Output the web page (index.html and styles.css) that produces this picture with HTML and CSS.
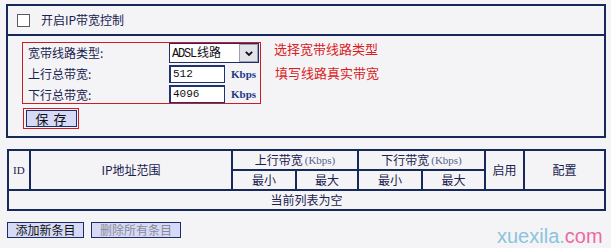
FILE: index.html
```html
<!DOCTYPE html>
<html lang="zh-CN">
<head>
<meta charset="utf-8">
<title>IP带宽控制</title>
<link rel="stylesheet" href="styles.css">
</head>
<body>
<div class="page">
  <section class="panel">
    <div class="panel-head">
      <span class="checkbox"></span>
      <span class="head-label">开启IP带宽控制</span>
    </div>
    <div class="panel-body">
      <div class="row-main">
        <div class="red-box form-grid">
          <span class="label">宽带线路类型:</span>
          <div class="select">
            <span class="select-text"><span class="latin">ADSL</span>线路</span>
            <span class="select-btn">
              <svg width="8" height="5" viewBox="0 0 8 5"><polyline points="0.8,0.8 4,4 7.2,0.8" fill="none" stroke="#111" stroke-width="1.8"/></svg>
            </span>
          </div>
          <span class="label">上行总带宽:</span>
          <div class="field"><span class="input">512</span><span class="unit">Kbps</span></div>
          <span class="label">下行总带宽:</span>
          <div class="field"><span class="input">4096</span><span class="unit">Kbps</span></div>
        </div>
        <div class="notes">
          <p>选择宽带线路类型</p>
          <p>填写线路真实带宽</p>
        </div>
      </div>
      <div class="red-box save-box"><button class="btn save">保 存</button></div>
    </div>
  </section>

  <div class="rules">
    <div class="cell c-id latin">ID</div>
    <div class="cell c-ip">IP地址范围</div>
    <div class="cell c-up">上行带宽 <span class="unit-h">(Kbps)</span></div>
    <div class="cell c-down">下行带宽 <span class="unit-h">(Kbps)</span></div>
    <div class="cell c-en">启用</div>
    <div class="cell c-cfg">配置</div>
    <div class="cell c-s1">最小</div>
    <div class="cell c-s2">最大</div>
    <div class="cell c-s3">最小</div>
    <div class="cell c-s4">最大</div>
    <div class="cell c-empty">当前列表为空</div>
  </div>

  <div class="actions">
    <button class="btn add">添加新条目</button>
    <button class="btn del" disabled>删除所有条目</button>
  </div>

  <div class="watermark"><span class="wm-a">xuexila.</span><span class="wm-b">com</span></div>
</div>
</body>
</html>
```

FILE: styles.css
```css
* { box-sizing: border-box; }
html, body {
  margin: 0;
  padding: 0;
  background: #f4f4f6;
  overflow: hidden;
}
body {
  font-family: "Noto Sans CJK SC", "Noto Sans", sans-serif;
  font-size: 12px;
  color: #19214f;
}
.page {
  position: relative;
  width: 611px;
  height: 248px;
  padding-top: 4px;
}
.latin { font-family: "Liberation Serif", serif; }

/* top panel */
.panel {
  margin-left: 6px;
  width: 600px;
  border: 2px solid #17285a;
  background: #f4f4f6;
}
.panel-head {
  height: 30px;
  border-bottom: 2px solid #17285a;
  display: flex;
  align-items: center;
  padding-left: 9px;
}
.checkbox {
  width: 13px;
  height: 13px;
  border: 1px solid #5a5a66;
  background: #fff;
}
.head-label {
  margin-left: 11px;
  font-size: 12px;
  line-height: 14px;
}
.panel-body {
  height: 100px;
  padding: 6px 0 0 14px;
}
.row-main {
  display: flex;
  align-items: flex-start;
}
.red-box { border: 1px solid #d01a24; }
.form-grid {
  width: 239px;
  height: 62px;
  padding-left: 5px;
  display: grid;
  grid-template-columns: 141px 90px;
  grid-template-rows: 21px 21px 18px;
  align-items: start;
}
.label {
  font-size: 12px;
  line-height: 20px;
}
.select {
  width: 90px;
  height: 20px;
  border: 1px solid #1f2f66;
  background: #fff;
  display: flex;
  align-items: center;
  justify-content: space-between;
  padding: 0 0 0 2px;
}
.select-text {
  font-size: 12px;
  line-height: 16px;
  color: #111;
}
.select-text .latin {
  font-family: "Liberation Mono", monospace;
  font-size: 12px;
  letter-spacing: -1.2px;
  margin-right: 1px;
}
.select-btn {
  width: 19px;
  height: 18px;
  background: #e3e3ea;
  border: 1px solid #9aa0b8;
  display: flex;
  align-items: center;
  justify-content: center;
}
.select-btn svg { display: block; }
.field {
  display: flex;
  align-items: center;
  gap: 6px;
  margin-top: 1px;
}
.form-grid .field:last-child { margin-top: 0; }
.input {
  width: 56px;
  height: 18px;
  border: 1px solid #1f3370;
  border-width: 2px 1px 1px 2px;
  background: #fff;
  padding-left: 2px;
  font-family: "Liberation Mono", monospace;
  font-size: 11px;
  line-height: 15px;
  color: #111;
}
.unit {
  font-family: "Liberation Serif", serif;
  font-size: 11px;
  font-weight: bold;
  color: #1f3a86;
}
.notes {
  margin: -2px 0 0 13px;
  display: flex;
  flex-direction: column;
  gap: 6px;
}
.notes p {
  margin: 0;
  font-size: 13px;
  line-height: 18px;
  color: #d81c24;
}
.notes p:last-child { margin-left: 1px; }

.save-box {
  margin: 4px 0 0 1px;
  width: 56px;
  height: 21px;
  padding: 1px 1px 1px 2px;
}
.btn {
  border: 1px solid #1d2d66;
  background: #d6daf7;
  font-family: "Noto Sans CJK SC", sans-serif;
  color: #111;
  padding: 0;
  margin: 0;
  cursor: pointer;
}
.save {
  display: block;
  width: 51px;
  height: 17px;
  font-size: 13px;
  line-height: 15px;
  letter-spacing: 1px;
}

/* rules table */
.rules {
  margin: 11px 0 0 7px;
  width: 599px;
  display: grid;
  grid-template-columns: 20px 200px 62px 60px 62px 61px 37px 79px;
  grid-template-rows: 18px 18px 18px;
  gap: 2px;
  padding: 2px;
  background: #17285a;
}
.cell {
  background: #f4f4f6;
  display: flex;
  align-items: center;
  justify-content: center;
  font-size: 12px;
  line-height: 16px;
  color: #19214f;
  white-space: nowrap;
}
.c-id { grid-row: 1 / 3; grid-column: 1; font-size: 11px; justify-content: flex-start; padding-left: 4px; }
.c-ip { grid-row: 1 / 3; grid-column: 2; }
.c-up { grid-row: 1; grid-column: 3 / 5; }
.c-down { grid-row: 1; grid-column: 5 / 7; }
.c-en { grid-row: 1 / 3; grid-column: 7; }
.c-cfg { grid-row: 1 / 3; grid-column: 8; }
.c-s1 { grid-row: 2; grid-column: 3; }
.c-s2 { grid-row: 2; grid-column: 4; }
.c-s3 { grid-row: 2; grid-column: 5; }
.c-s4 { grid-row: 2; grid-column: 6; }
.c-empty { grid-row: 3; grid-column: 1 / 9; }
.unit-h {
  font-family: "Liberation Serif", serif;
  font-size: 11px;
  color: #56638f;
  margin-left: 2px;
}

/* actions */
.actions {
  margin: 11px 0 0 7px;
  display: flex;
  gap: 7px;
}
.add, .del {
  height: 16px;
  font-size: 12px;
  line-height: 14px;
}
.add { width: 77px; }
.del { width: 90px; color: #8a8a96; cursor: default; }

.watermark {
  position: absolute;
  left: 497px;
  top: 226px;
  font-family: "Liberation Sans", Arial, sans-serif;
  font-size: 20px;
  line-height: 20px;
}
.wm-a { color: #8cc3dc; }
.wm-b { color: #ec6aa3; }
```
